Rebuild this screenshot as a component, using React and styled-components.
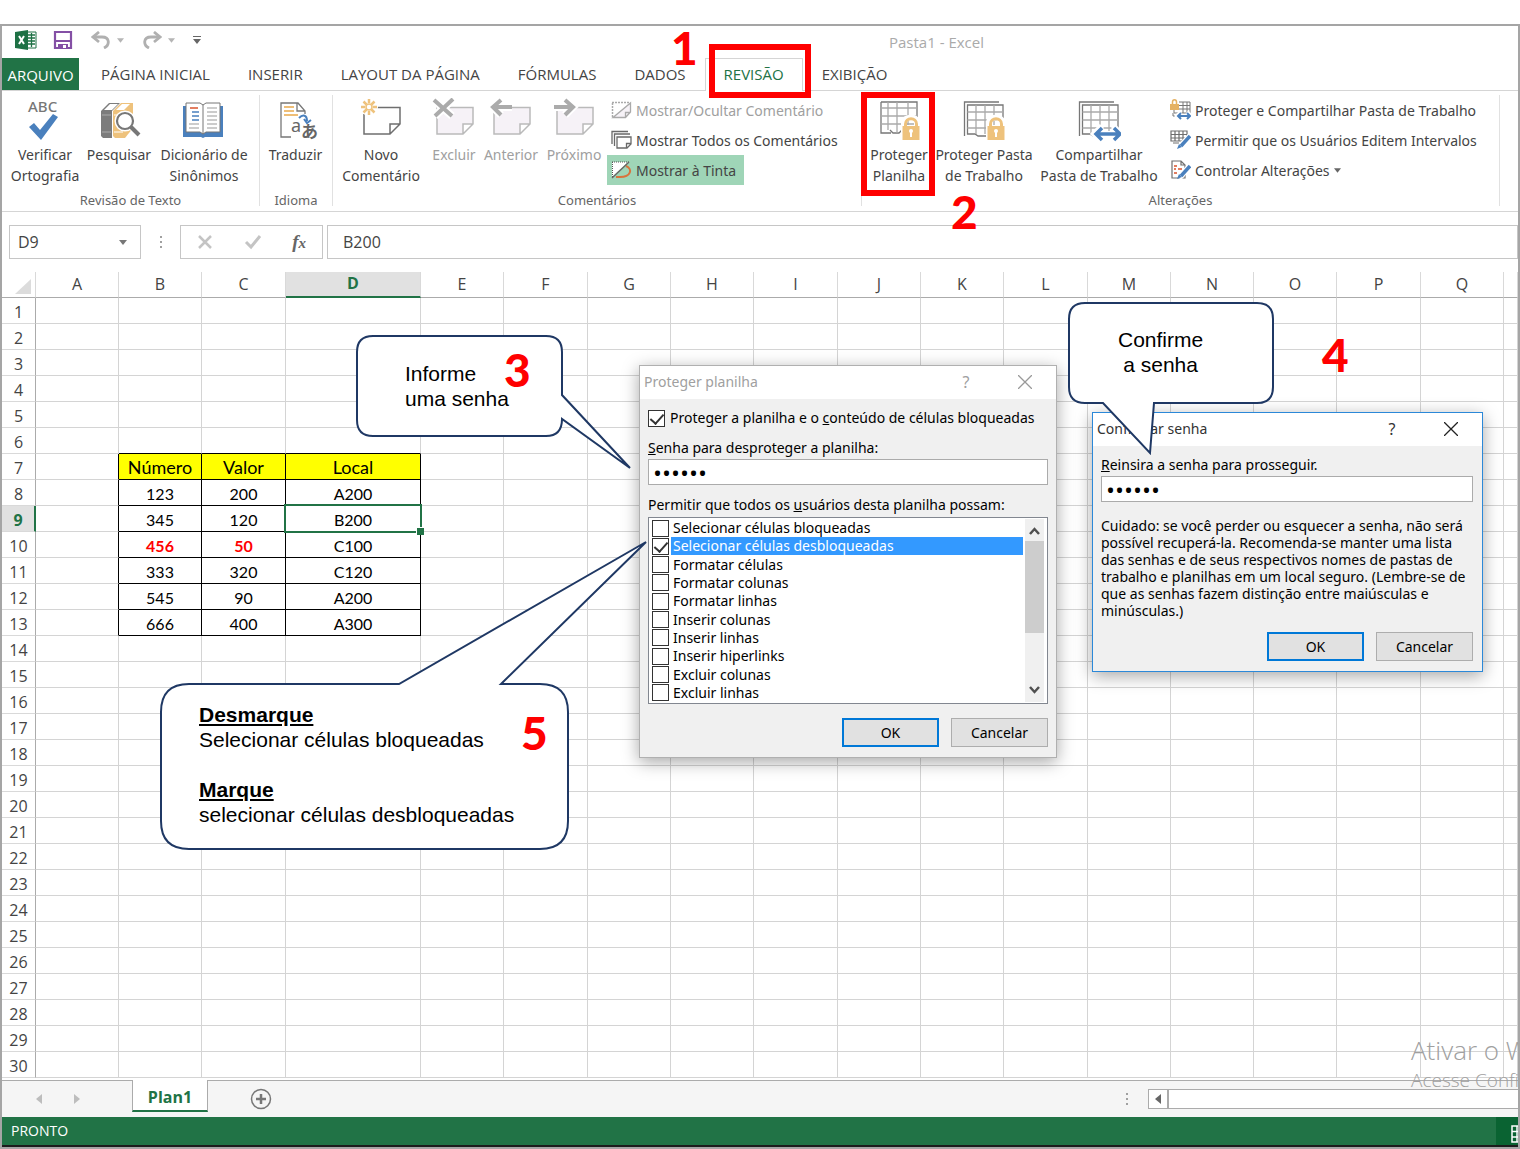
import React, { useState } from "react";
import styled, { createGlobalStyle, css } from "styled-components";

const GlobalStyle = createGlobalStyle`
  * {
    box-sizing: border-box;
  }
  body {
    margin: 0;
    background: #ffffff;
    color: #444444;
    font-family: "Open Sans", "Noto Sans", sans-serif;
    font-size: 15px;
  }
  button, input {
    font-family: inherit;
    font-size: inherit;
    color: inherit;
    margin: 0;
    padding: 0;
  }
  button {
    border: 0;
    background: transparent;
  }
  svg {
    display: block;
    flex: none;
  }
`;

const Page = styled.div`
  padding-top: 24px;
`;

const Window = styled.div`
  position: relative;
  overflow: hidden;
  border: 2px solid #a5a5a5;
`;

/* title bar */

const TitleBar = styled.header`
  display: flex;
  align-items: center;
  height: 32px;
  padding: 0 13px;
`;

const QuickButton = styled.button`
  display: flex;
  align-items: center;
  gap: 6px;
  margin-right: ${props => props.$space || 0}px;
  padding-bottom: 4px;
`;

const WindowTitle = styled.h1`
  margin: 0 0 0 688px;
  font-size: 15px;
  font-weight: 400;
  color: #aaaaaa;
  white-space: nowrap;
`;

/* tabs */

const Tabs = styled.nav`
  display: flex;
  height: 33px;
  border-bottom: 1px solid #d5d5d5;
`;

const Tab = styled.button`
  height: 33px;
  padding: 0 18px 2px;
  border: 1px solid transparent;
  border-bottom: 0;
  white-space: nowrap;
  ${props =>
    props.$active &&
    css`
      background: #ffffff;
      border-color: #d5d5d5;
      color: #217346;
    `}
`;

const FileTab = styled(Tab)`
  width: 77px;
  height: 32px;
  padding: 0;
  margin-right: 3px;
  background: #217346;
  color: #ffffff;
`;

/* ribbon */

const Ribbon = styled.div`
  display: flex;
  height: 121px;
  padding: 4px 0 5px;
  border-bottom: 1px solid #d5d5d5;
  font-family: "Noto Sans", "Open Sans", sans-serif;
  font-size: 14px;
`;

const Group = styled.section`
  display: flex;
  flex-direction: column;
  flex: none;
  width: ${props => props.$width}px;
  border-right: 1px solid #e1e1e1;
`;

const GroupBody = styled.div`
  display: flex;
  flex: 1;
`;

const GroupName = styled.div`
  height: 20px;
  padding-top: 4px;
  font-size: 13px;
  line-height: 20px;
  text-align: center;
  color: #666666;
`;

const BigButton = styled.button`
  display: flex;
  flex-direction: column;
  align-items: center;
  flex: none;
  width: ${props => props.$width}px;
  padding-top: 3px;
  line-height: 21px;
  white-space: nowrap;
  color: ${props => (props.disabled ? "#a0a0a0" : "#444444")};
  svg {
    margin-bottom: 2px;
  }
`;

const SmallList = styled.div`
  display: flex;
  flex-direction: column;
  align-items: flex-start;
  margin-left: ${props => props.$indent || 0}px;
`;

const SmallButton = styled.button`
  display: flex;
  align-items: center;
  gap: 4px;
  height: 30px;
  padding: 0 8px 0 4px;
  white-space: nowrap;
  background: ${props => (props.$pressed ? "#9fd5b7" : "transparent")};
  color: ${props => (props.disabled ? "#a0a0a0" : "#444444")};
`;

/* formula bar */

const FormulaBar = styled.div`
  display: flex;
  height: 60px;
  padding: 13px 0 13px 7px;
  font-size: 16px;
`;

const NameBox = styled.div`
  display: flex;
  align-items: center;
  width: 132px;
  border: 1px solid #c6c6c6;
  input {
    width: 100px;
    margin-left: 8px;
    border: 0;
    outline: 0;
  }
`;

const Dots = styled.div`
  display: flex;
  flex-direction: column;
  justify-content: center;
  gap: 3px;
  width: ${props => props.$width}px;
  padding-left: ${props => props.$indent || 0}px;
  i {
    width: 2px;
    height: 2px;
    background: #a0a0a0;
  }
`;

const FormulaButtons = styled.div`
  display: flex;
  align-items: center;
  justify-content: space-between;
  width: 143px;
  padding: 0 16px;
  border: 1px solid #c6c6c6;
`;

const FxButton = styled.button`
  font: italic bold 19px/20px "Liberation Serif", serif;
  color: #666666;
  sub {
    font-size: 15px;
    line-height: 0;
    vertical-align: baseline;
  }
`;

const FormulaInput = styled.input`
  flex: 1;
  min-width: 0;
  margin-left: 4px;
  padding-left: 15px;
  border: 1px solid #c6c6c6;
  outline: 0;
`;

/* sheet */

const Sheet = styled.table`
  width: 100%;
  table-layout: fixed;
  border-collapse: separate;
  border-spacing: 0;
  margin-bottom: 2px;
`;

const ColumnHead = styled.th`
  height: 26px;
  padding: 0 0 2px;
  border-right: 1px solid #d9d9d9;
  border-bottom: 1px solid #ababab;
  font-size: 16px;
  font-weight: 400;
  line-height: 22px;
  color: #444444;
  ${props =>
    props.$selected &&
    css`
      background: #e1e1e1;
      border-bottom: 2px solid #217346;
      font-weight: 700;
      color: #217346;
    `}
  svg {
    margin: 6px 0 0 13px;
  }
`;

const RowHead = styled.th`
  height: 26px;
  padding: 3px 0 0;
  border-right: 1px solid #ababab;
  border-bottom: 1px solid #d9d9d9;
  font-size: 16px;
  font-weight: 400;
  line-height: 22px;
  color: #444444;
  ${props =>
    props.$selected &&
    css`
      background: #e1e1e1;
      border-right: 2px solid #217346;
      font-weight: 700;
      color: #217346;
    `}
`;

const Cell = styled.td`
  position: relative;
  height: 26px;
  padding: 2px 0 0;
  border-right: 1px solid ${props => (props.$inkRight ? "#000000" : "#d4d4d4")};
  border-bottom: 1px solid ${props => (props.$inkBottom ? "#000000" : "#d4d4d4")};
  background: ${props => (props.$head ? "#ffff00" : "transparent")};
  font-family: Lato, sans-serif;
  font-size: ${props => (props.$head ? 18 : 16)}px;
  line-height: 23px;
  text-align: center;
  color: ${props => (props.$alert ? "#ff0000" : "#000000")};
  font-weight: ${props => (props.$alert ? 700 : 400)};
`;

const Selection = styled.span`
  position: absolute;
  z-index: 1;
  inset: -2px;
  border: 2px solid #217346;
  &::after {
    content: "";
    position: absolute;
    right: -4px;
    bottom: -4px;
    width: 7px;
    height: 7px;
    border: solid #ffffff;
    border-width: 1px 0 0 1px;
    background: #217346;
  }
`;

/* sheet tabs and status bar */

const SheetBar = styled.div`
  display: flex;
  height: 37px;
  border-top: 1px solid #ababab;
  background: #f5f5f5;
`;

const SheetNav = styled.div`
  display: flex;
  align-items: center;
  gap: 30px;
  width: 130px;
  padding-left: 34px;
`;

const SheetTab = styled.button`
  width: 76px;
  height: 32px;
  margin-top: -1px;
  padding-top: 3px;
  border: 1px solid #ababab;
  border-top: 0;
  border-bottom: 2px solid #217346;
  background: #ffffff;
  font-size: 16px;
  font-weight: 700;
  color: #217346;
`;

const AddSheet = styled.button`
  margin: 0 auto 0 42px;
`;

const ScrollTrack = styled.div`
  display: flex;
  width: 370px;
  height: 20px;
  margin-top: 8px;
  border: 1px solid #ababab;
  border-right: 0;
  background: #ffffff;
  button {
    display: grid;
    place-items: center;
    width: 20px;
    border-right: 2px solid #ababab;
  }
`;

const StatusBar = styled.footer`
  display: flex;
  align-items: stretch;
  justify-content: space-between;
  height: 30px;
  padding-left: 9px;
  border-bottom: 2px solid #1c1c1c;
  background: #217346;
  font-size: 14px;
  line-height: 28px;
  color: #ffffff;
  button {
    width: 22px;
    padding: 5px 0 0 15px;
    overflow: hidden;
    background: #0a6332;
  }
`;

const Watermark = styled.div`
  position: absolute;
  left: 1409px;
  bottom: 53px;
  font-size: 19px;
  font-weight: 300;
  line-height: 27px;
  white-space: nowrap;
  color: #a0a0a0;
  pointer-events: none;
  p {
    margin: 0;
  }
  p:first-child {
    font-size: 26px;
    line-height: 33px;
  }
`;

/* dialogs */

const Dialog = styled.form`
  position: absolute;
  left: ${props => props.$x}px;
  top: ${props => props.$y}px;
  width: ${props => props.$width}px;
  border: 1px solid ${props => (props.$focused ? "#2b88d8" : "#b0b0b0")};
  background: #f0f0f0;
  box-shadow: 0 4px 16px rgba(0, 0, 0, 0.35);
  font-family: "Noto Sans", "Open Sans", sans-serif;
  font-size: 14px;
  color: #000000;
`;

const DialogTitle = styled.div`
  display: flex;
  align-items: center;
  height: 33px;
  padding: 0 24px 2px 4px;
  background: #ffffff;
  color: ${props => (props.$muted ? "#a0a0a0" : "#333333")};
  h2 {
    flex: 1;
    margin: 0;
    font-size: 14px;
    font-weight: 400;
  }
  button:first-of-type {
    width: 12px;
    margin-right: 46px;
    font-size: 16px;
  }
`;

const DialogBody = styled.div`
  display: flex;
  flex-direction: column;
  padding: ${props => props.$pad};
`;

const Label = styled.label`
  line-height: 20px;
  white-space: nowrap;
`;

const CheckLabel = styled(Label)`
  display: flex;
  align-items: center;
  gap: 5px;
`;

const CheckBox = styled.input.attrs({ type: "checkbox" })`
  appearance: none;
  display: grid;
  justify-content: center;
  flex: none;
  width: 17px;
  height: 17px;
  border: 1px solid #333333;
  background: #ffffff;
  &:checked::before {
    content: "";
    width: 6px;
    height: 11px;
    border: solid #333333;
    border-width: 0 2px 2px 0;
    transform: rotate(42deg);
  }
`;

const Password = styled.input.attrs({ type: "password" })`
  height: 26px;
  padding: 0 4px;
  border: 1px solid #ababab;
  outline: 0;
  background: #ffffff;
  font-family: "Open Sans", sans-serif;
  font-size: 24px;
  line-height: 24px;
`;

const ListBox = styled.div`
  display: flex;
  height: 187px;
  border: 1px solid #828790;
  background: #ffffff;
`;

const Options = styled.div`
  display: flex;
  flex-direction: column;
  justify-content: space-between;
  flex: 1;
  padding: 1px 0 1px 3px;
`;

const Option = styled.label`
  display: flex;
  align-items: center;
  gap: 2px;
  height: 18px;
  line-height: 18px;
  span {
    flex: 1;
    padding-left: 2px;
    background: ${props => (props.$selected ? "#3399ff" : "transparent")};
    color: ${props => (props.$selected ? "#ffffff" : "#000000")};
  }
`;

const ListScroll = styled.div`
  display: flex;
  flex-direction: column;
  align-items: center;
  width: 19px;
  margin: 1px 3px 1px 2px;
  padding: 8px 0;
  background: #f0f0f0;
`;

const ListThumb = styled.div`
  width: 19px;
  height: 92px;
  margin: 6px 0 auto;
  background: #cdcdcd;
`;

const Warning = styled.p`
  margin: 15px 0 13px;
  line-height: 17px;
  white-space: nowrap;
`;

const Buttons = styled.div`
  display: flex;
  justify-content: flex-end;
  gap: 12px;
`;

const PushButton = styled.button`
  width: 97px;
  height: 29px;
  border: ${props => (props.$primary ? "2px solid #0078d7" : "1px solid #adadad")};
  background: #e1e1e1;
`;

const Spacer = styled.span`
  display: block;
  height: ${props => props.$height}px;
`;

/* notes over the screen */

const Callout = styled.div`
  position: absolute;
  left: ${props => props.$x}px;
  top: ${props => props.$y}px;
  padding: ${props => props.$pad};
  font-family: "Liberation Sans", Arial, sans-serif;
  font-size: 21px;
  line-height: 25px;
  white-space: nowrap;
  text-align: ${props => props.$align || "left"};
  color: #000000;
  > svg {
    position: absolute;
    left: 0;
    top: 0;
    overflow: visible;
  }
  p {
    position: relative;
    margin: 0;
  }
  p + p {
    margin-top: 25px;
  }
`;

const Step = styled.strong`
  position: absolute;
  left: ${props => props.$x}px;
  top: ${props => props.$y}px;
  font: 900 46px/36px Lato, sans-serif;
  color: #ff0000;
`;

const Highlight = styled.div`
  position: absolute;
  left: ${props => props.$x}px;
  top: ${props => props.$y}px;
  width: ${props => props.$width}px;
  height: ${props => props.$height}px;
  border: 6px solid #ff0000;
  pointer-events: none;
`;

/* icons */

const Caret = ({ size = 7, color = "#b5b5b5" }) => (
  <svg width={size} height="5" viewBox="0 0 8 5">
    <path d="M0 0h8L4 5z" fill={color} />
  </svg>
);

const ExcelIcon = () => (
  <svg width="22" height="22" viewBox="0 0 22 22">
    <path d="M12 3h9v16h-9z" fill="#fff" stroke="#1e7145" />
    <path d="M13 6h7M13 9h7M13 12h7M13 15h7M16.500 4v14" stroke="#1e7145" strokeWidth="1.300" />
    <path d="M0 3l13-2v20L0 19z" fill="#1e7145" />
    <path d="M4 7l5 8M9 7l-5 8" stroke="#fff" strokeWidth="2" />
  </svg>
);

const SaveIcon = () => (
  <svg width="20" height="20" viewBox="0 0 20 20" fill="none">
    <path d="M2 2h16v16H2z" stroke="#8450a5" strokeWidth="2.200" />
    <path d="M3 11h14" stroke="#8450a5" strokeWidth="2" />
    <path d="M5 18v-4h10v4z" fill="#8450a5" />
    <path d="M10 15h3v3h-3z" fill="#fff" />
  </svg>
);

const UndoIcon = ({ flip }) => (
  <svg width="20" height="18" viewBox="0 0 20 18" fill="none" stroke="#b0b0b0" strokeWidth="2.800">
    <g transform={flip ? "matrix(-1 0 0 1 20 0)" : undefined}>
      <path d="M8 1L2 6l6 5" />
      <path d="M2 6h9c8 0 8 8 2 11" />
    </g>
  </svg>
);

const SpellIcon = () => (
  <svg width="44" height="44" viewBox="0 0 44 44" overflow="visible">
    <text x="5" y="14" fontSize="15" fontWeight="500" fill="#777" fontFamily="Noto Sans, sans-serif">ABC</text>
    <path d="M6 29l5-4 6 7 13-16 5 3-17 23z" fill="#4a80bd" />
  </svg>
);

const ResearchIcon = () => (
  <svg width="44" height="44" viewBox="0 0 44 44">
    <path d="M4 13l8-8h11l-8 8v27H6l-2-2z" fill="#7c7c7c" />
    <path d="M7 12l6-6h8l-6 6z" fill="#fff" />
    <path d="M5 17h9M5 34h9" stroke="#aaa" />
    <path d="M16 13l8-8h12v25l-8 10H18l-2-2z" fill="#eec27c" />
    <path d="M19 12l6-6h8l-6 6z" fill="#fff" />
    <path d="M17 17h9M17 34h9" stroke="#fff" />
    <circle cx="28" cy="23" r="8.500" fill="#fff" stroke="#fff" strokeWidth="4" />
    <path d="M34 29l8 8" stroke="#fff" strokeWidth="6" />
    <circle cx="28" cy="23" r="8" fill="#fff" stroke="#777" strokeWidth="2.200" />
    <path d="M34 29l8 8" stroke="#777" strokeWidth="4" />
  </svg>
);

const BookIcon = () => (
  <svg width="44" height="44" viewBox="0 0 44 44" fill="none">
    <path d="M1 8h40v31H23l-2 1-2-1H1z" fill="#4a80bd" />
    <path d="M4 5h14l3 2 3-2h14v29H24l-3 2-3-2H4z" fill="#fff" stroke="#777" />
    <path d="M21 7v29" stroke="#777" />
    <path d="M8 10h8" stroke="#d9532c" strokeWidth="1.500" />
    <path d="M10 14h7M10 18h7M10 22h7" stroke="#4a80bd" strokeWidth="1.500" />
    <path d="M7 26h10M7 30h10M25 10h10M25 14h10M25 18h10M25 22h10M25 26h10M25 30h10" stroke="#999" strokeWidth="1.200" />
  </svg>
);

const TranslateIcon = () => (
  <svg width="44" height="44" viewBox="0 0 44 44" fill="none" overflow="visible">
    <path d="M17 39H7V5h17l7 8v3M23 5v8h8" stroke="#777" strokeWidth="1.300" />
    <path d="M10 9h10M10 13h10M10 17h14" stroke="#e9a94b" strokeWidth="1.500" />
    <path d="M25 20c4-4 8-3 8 3M30 21l3 4 4-3" stroke="#4a80bd" strokeWidth="2" />
    <text x="17" y="34" fontSize="18" fill="#666" fontFamily="Noto Sans, sans-serif">a</text>
    <text x="27" y="40" fontSize="17" fontWeight="700" fill="#666" fontFamily="Noto Sans CJK JP, sans-serif">あ</text>
  </svg>
);

const Note = ({ muted }) => (
  <path
    d="M5 9.500h36V26L31 36H5zM41 26H31v10"
    fill={muted ? "#f6f2f7" : "#fff"}
    stroke={muted ? "#bababa" : "#6f6f6f"}
    strokeWidth="1.500"
  />
);

const NewCommentIcon = () => (
  <svg width="44" height="44" viewBox="0 0 44 44" fill="none">
    <Note />
    <circle cx="10" cy="9" r="9" fill="#fff" />
    <path
      d="M10 1v4M10 13v4M2 9h4M14 9h4M4.500 3.500l3 3M12.500 11.500l3 3M15.500 3.500l-3 3M7.500 11.500l-3 3"
      stroke="#eec27c"
      strokeWidth="2.500"
    />
    <circle cx="10" cy="9" r="3" stroke="#eec27c" strokeWidth="1.500" />
  </svg>
);

const markPaths = {
  remove: "M2 2l18 16M21 1L3 18",
  back: "M4 9h19M12 2L4 9l8 8",
  next: "M2 9h19M13 2l8 7-8 8"
};

const MutedCommentIcon = ({ mark }) => (
  <svg width="44" height="44" viewBox="0 0 44 44" fill="none">
    <Note muted />
    <path d={markPaths[mark]} stroke="#fff" strokeWidth="8" />
    <path d={markPaths[mark]} stroke="#ababab" strokeWidth="4" />
  </svg>
);

const ToggleCommentIcon = () => (
  <svg width="21" height="20" viewBox="0 0 21 20" fill="none" stroke="#aaa">
    <path d="M1 2.500h18M1.500 3v14" strokeDasharray="2 1" strokeWidth="1.500" />
    <path d="M2 17.500L19.500 3v9l-5 5.500zM14.500 17.500v-5h5" fill="#f6f2f7" strokeWidth="1.300" />
  </svg>
);

const AllCommentsIcon = () => (
  <svg width="21" height="20" viewBox="0 0 21 20" fill="none" stroke="#6a6a6a" strokeWidth="1.300">
    <path d="M1 14V1.500h16M3.500 16V4H19" />
    <path d="M6 7h14v7l-4 4H6zM20 13.500h-4.500V18" fill="#fff" />
  </svg>
);

const InkIcon = () => (
  <svg width="21" height="20" viewBox="0 0 21 20" fill="none">
    <path d="M1 2h16L1 17z" fill="#fff" />
    <path d="M1 2h17M1.500 2v15" stroke="#555" strokeDasharray="1 1" />
    <path d="M15 6c7 3 5 11-6 11H5" stroke="#d9733c" strokeWidth="2" />
    <path d="M1 18L18 2" stroke="#666" strokeWidth="1.300" />
  </svg>
);

const Lock = () => (
  <g>
    <path d="M27 29v-4c0-7 13-7 13-1v5" stroke="#fff" strokeWidth="6" />
    <path d="M24 27h19v16H24z" fill="#fff" />
    <path d="M28.500 29v-3c0-7 11-7 11 0v3" stroke="#eec27c" strokeWidth="3" />
    <path d="M25.500 28h17v14h-17z" fill="#eec27c" />
    <circle cx="34" cy="33" r="2" fill="#fff" />
    <path d="M34 33v6" stroke="#fff" strokeWidth="2" />
  </g>
);

const Share = () => (
  <g>
    <path d="M17 36h27M25 28l-8 8 8 8M36 28l8 8-8 8" stroke="#fff" strokeWidth="6" />
    <path d="M19 36h24M25 30l-6 6 6 6M37 30l6 6-6 6" stroke="#4a80bd" strokeWidth="3.500" />
  </g>
);

const SheetIcon = ({ book, children }) => (
  <svg width="44" height="44" viewBox="0 0 44 44" fill="none">
    {book ? (
      <g stroke="#777" strokeWidth="1.300">
        <path d="M2.500 38V4H37" />
        <path d="M5.500 7H41v29H27l-3 2h-8l-3-2H5.500z" fill="#fff" />
        <path d="M5.500 14H41M5.500 22H41M5.500 30H41M14 7v29M23 7v29M32 7v29" stroke="#aaa" />
      </g>
    ) : (
      <g stroke="#777" strokeWidth="1.300">
        <path d="M4 4h36v28H25l-3 3h-6l-3-3M4 4v31h10" fill="#fff" />
        <path d="M4 10h36M4 18h36M4 26h36M11 4v28M20 4v31M31 4v28" stroke="#aaa" />
      </g>
    )}
    {children}
  </svg>
);

const ProtectShareIcon = () => (
  <svg width="21" height="22" viewBox="0 0 21 22" fill="none">
    <path d="M9 3h11v11H4v-3M9 6.500h11M9 10h11M13 3v11M17 3v11M3 14v3h3" stroke="#777" />
    <path d="M2.500 5V3c0-3 4-3 4 0v2" stroke="#e5b264" strokeWidth="1.500" />
    <path d="M0 5h9v6H0z" fill="#e5b264" />
    <path d="M8 17h12M11 13l-4 4 4 4M17 13l4 4-4 4" stroke="#fff" strokeWidth="4" />
    <path d="M8 17h12M11 14l-3 3 3 3M17 14l3 3-3 3" stroke="#4a80bd" strokeWidth="2" />
  </svg>
);

const PencilMark = () => (
  <g>
    <path d="M20 7L9 19" stroke="#fff" strokeWidth="6" />
    <path d="M20 7l-9 10" stroke="#4a80bd" strokeWidth="3.500" />
    <path d="M9 15l3 3-5 2z" fill="#4a80bd" />
  </g>
);

const AllowEditIcon = () => (
  <svg width="21" height="22" viewBox="0 0 21 22" fill="none">
    <path d="M1 2h16v10H1zM1 5.500h16M1 9h16M5 2v10M9 2v10M13 2v10" stroke="#6f6f6f" strokeWidth="1.200" />
    <path d="M3 14h6" stroke="#6f6f6f" />
    <PencilMark />
  </svg>
);

const TrackIcon = () => (
  <svg width="21" height="22" viewBox="0 0 21 22" fill="none">
    <path d="M2 2h9l4 4v13H2zM11 2v4h4" stroke="#6f6f6f" strokeWidth="1.200" />
    <path d="M4 7h3M4 10h2M8 10h4M4 14h3" stroke="#d9532c" strokeWidth="1.500" />
    <PencilMark />
  </svg>
);

const CloseIcon = ({ color }) => (
  <svg width="14" height="14" viewBox="0 0 14 14" stroke={color} strokeWidth="1.300">
    <path d="M0 0l14 14M14 0L0 14" />
  </svg>
);

const Chevron = ({ down }) => (
  <svg width="11" height="8" viewBox="0 0 11 8" fill="none" stroke="#505050" strokeWidth="2.500">
    <path d={down ? "M1 1l4.500 5L10 1" : "M1 7l4.500-5L10 7"} />
  </svg>
);

const Arrow = ({ right, color = "#bdbdbd" }) => (
  <svg width="7" height="10" viewBox="0 0 7 10" fill={color}>
    <path d={right ? "M1 0l6 5-6 5z" : "M6 0L0 5l6 5z"} />
  </svg>
);

/* data */

const tabs = [
  "PÁGINA INICIAL",
  "INSERIR",
  "LAYOUT DA PÁGINA",
  "FÓRMULAS",
  "DADOS",
  "REVISÃO",
  "EXIBIÇÃO"
];

const columns = [
  ["A", 83],
  ["B", 83],
  ["C", 84],
  ["D", 135],
  ["E", 83],
  ["F", 84],
  ["G", 83],
  ["H", 83],
  ["I", 84],
  ["J", 83],
  ["K", 83],
  ["L", 84],
  ["M", 83],
  ["N", 83],
  ["O", 83],
  ["P", 84],
  ["Q", 83]
];

const firstRow = 7;
const records = [
  ["Número", "Valor", "Local"],
  ["123", "200", "A200"],
  ["345", "120", "B200"],
  ["456", "50", "C100"],
  ["333", "320", "C120"],
  ["545", "90", "A200"],
  ["666", "400", "A300"]
];

const permissions = [
  "Selecionar células bloqueadas",
  "Selecionar células desbloqueadas",
  "Formatar células",
  "Formatar colunas",
  "Formatar linhas",
  "Inserir colunas",
  "Inserir linhas",
  "Inserir hiperlinks",
  "Excluir colunas",
  "Excluir linhas"
];

// records start at column B
const valueAt = (row, col) => {
  const record = records[row - firstRow];
  return record ? record[col - 1] : undefined;
};

const SheetRow = ({ row }) => (
  <tr>
    <RowHead scope="row" $selected={row === 9}>
      {row}
    </RowHead>
    {[...columns, ["R"]].map(([name], col) => {
      const value = valueAt(row, col);
      return (
        <Cell
          key={name}
          $head={Boolean(value) && row === firstRow}
          $alert={row === 10 && col < 3}
          $inkRight={Boolean(value || valueAt(row, col + 1))}
          $inkBottom={Boolean(value || valueAt(row + 1, col))}
        >
          {value}
          {row === 9 && name === "D" && <Selection />}
        </Cell>
      );
    })}
  </tr>
);

const RibbonBar = () => (
  <Ribbon>
    <Group $width={258}>
      <GroupBody>
        <BigButton $width={86}>
          <SpellIcon />
          <span>Verificar</span>
          <span>Ortografia</span>
        </BigButton>
        <BigButton $width={62}>
          <ResearchIcon />
          Pesquisar
        </BigButton>
        <BigButton $width={108}>
          <BookIcon />
          <span>Dicionário de</span>
          <span>Sinônimos</span>
        </BigButton>
      </GroupBody>
      <GroupName>Revisão de Texto</GroupName>
    </Group>
    <Group $width={73}>
      <GroupBody>
        <BigButton $width={71}>
          <TranslateIcon />
          Traduzir
        </BigButton>
      </GroupBody>
      <GroupName>Idioma</GroupName>
    </Group>
    <Group $width={529}>
      <GroupBody>
        <BigButton $width={96}>
          <NewCommentIcon />
          <span>Novo</span>
          <span>Comentário</span>
        </BigButton>
        <BigButton $width={50} disabled>
          <MutedCommentIcon mark="remove" />
          Excluir
        </BigButton>
        <BigButton $width={64} disabled>
          <MutedCommentIcon mark="back" />
          Anterior
        </BigButton>
        <BigButton $width={62} disabled>
          <MutedCommentIcon mark="next" />
          Próximo
        </BigButton>
        <SmallList $indent={2}>
          <SmallButton disabled>
            <ToggleCommentIcon />
            Mostrar/Ocultar Comentário
          </SmallButton>
          <SmallButton>
            <AllCommentsIcon />
            Mostrar Todos os Comentários
          </SmallButton>
          <SmallButton $pressed>
            <InkIcon />
            Mostrar à Tinta
          </SmallButton>
        </SmallList>
      </GroupBody>
      <GroupName>Comentários</GroupName>
    </Group>
    <Group $width={638}>
      <GroupBody>
        <BigButton $width={74}>
          <SheetIcon>
            <Lock />
          </SheetIcon>
          <span>Proteger</span>
          <span>Planilha</span>
        </BigButton>
        <BigButton $width={96}>
          <SheetIcon book>
            <Lock />
          </SheetIcon>
          <span>Proteger Pasta</span>
          <span>de Trabalho</span>
        </BigButton>
        <BigButton $width={134}>
          <SheetIcon book>
            <Share />
          </SheetIcon>
          <span>Compartilhar</span>
          <span>Pasta de Trabalho</span>
        </BigButton>
        <SmallList>
          <SmallButton>
            <ProtectShareIcon />
            Proteger e Compartilhar Pasta de Trabalho
          </SmallButton>
          <SmallButton>
            <AllowEditIcon />
            Permitir que os Usuários Editem Intervalos
          </SmallButton>
          <SmallButton>
            <TrackIcon />
            Controlar Alterações
            <Caret color="#666666" />
          </SmallButton>
        </SmallList>
      </GroupBody>
      <GroupName>Alterações</GroupName>
    </Group>
  </Ribbon>
);

const ProtectDialog = () => {
  const [checked, setChecked] = useState([1]);
  const toggle = index =>
    setChecked(checked.includes(index) ? checked.filter(i => i !== index) : [...checked, index]);

  return (
    <Dialog $x={637} $y={339} $width={418} onSubmit={e => e.preventDefault()}>
      <DialogTitle $muted>
        <h2>Proteger planilha</h2>
        <button type="button">?</button>
        <button type="button" aria-label="Fechar">
          <CloseIcon color="#999999" />
        </button>
      </DialogTitle>
      <DialogBody $pad="9px 8px 10px">
        <CheckLabel>
          <CheckBox defaultChecked />
          <span>
            Proteger a planilha e o <u>c</u>onteúdo de células bloqueadas
          </span>
        </CheckLabel>
        <Spacer $height={10} />
        <Label htmlFor="senha">
          <u>S</u>enha para desproteger a planilha:
        </Label>
        <Spacer $height={1} />
        <Password id="senha" defaultValue="abc123" />
        <Spacer $height={10} />
        <Label as="div">
          Permitir que todos os <u>u</u>suários desta planilha possam:
        </Label>
        <Spacer $height={2} />
        <ListBox>
          <Options>
            {permissions.map((text, index) => (
              <Option key={text} $selected={index === 1}>
                <CheckBox checked={checked.includes(index)} onChange={() => toggle(index)} />
                <span>{text}</span>
              </Option>
            ))}
          </Options>
          <ListScroll>
            <Chevron />
            <ListThumb />
            <Chevron down />
          </ListScroll>
        </ListBox>
        <Spacer $height={14} />
        <Buttons>
          <PushButton $primary>OK</PushButton>
          <PushButton type="button">Cancelar</PushButton>
        </Buttons>
      </DialogBody>
    </Dialog>
  );
};

const ConfirmDialog = () => (
  <Dialog $x={1090} $y={386} $width={391} $focused onSubmit={e => e.preventDefault()}>
    <DialogTitle>
      <h2>Confirmar senha</h2>
      <button type="button">?</button>
      <button type="button" aria-label="Fechar">
        <CloseIcon color="#222222" />
      </button>
    </DialogTitle>
    <DialogBody $pad="9px 9px 10px 8px">
      <Label htmlFor="confirmacao">
        <u>R</u>einsira a senha para prosseguir.
      </Label>
      <Spacer $height={1} />
      <Password id="confirmacao" defaultValue="abc123" />
      <Warning>
        Cuidado: se você perder ou esquecer a senha, não será
        <br />
        possível recuperá-la. Recomenda-se manter uma lista
        <br />
        das senhas e de seus respectivos nomes de pastas de
        <br />
        trabalho e planilhas em um local seguro. (Lembre-se de
        <br />
        que as senhas fazem distinção entre maiúsculas e
        <br />
        minúsculas.)
      </Warning>
      <Buttons>
        <PushButton $primary>OK</PushButton>
        <PushButton type="button">Cancelar</PushButton>
      </Buttons>
    </DialogBody>
  </Dialog>
);

const Bubble = ({ width, height, d }) => (
  <svg width={width} height={height} fill="#fff" stroke="#1f3864" strokeWidth="2">
    <path d={d} />
  </svg>
);

const App = () => (
  <Page>
    <GlobalStyle />
    <Window>
      <TitleBar>
        <QuickButton $space={16} aria-label="Excel">
          <ExcelIcon />
        </QuickButton>
        <QuickButton $space={18} aria-label="Salvar">
          <SaveIcon />
        </QuickButton>
        <QuickButton $space={18} aria-label="Desfazer">
          <UndoIcon />
          <Caret />
        </QuickButton>
        <QuickButton $space={18} aria-label="Refazer">
          <UndoIcon flip />
          <Caret />
        </QuickButton>
        <QuickButton aria-label="Personalizar">
          <svg width="8" height="8" viewBox="0 0 8 8" fill="#666">
            <path d="M0 0h8v1H0zM0 3h8L4 8z" />
          </svg>
        </QuickButton>
        <WindowTitle>Pasta1 - Excel</WindowTitle>
      </TitleBar>
      <Tabs>
        <FileTab>ARQUIVO</FileTab>
        {tabs.map(name => (
          <Tab key={name} $active={name === "REVISÃO"}>
            {name}
          </Tab>
        ))}
      </Tabs>
      <RibbonBar />
      <FormulaBar>
        <NameBox>
          <input aria-label="Caixa de nome" defaultValue="D9" />
          <Caret size={10} color="#777777" />
        </NameBox>
        <Dots $width={39} $indent={19}>
          <i />
          <i />
          <i />
        </Dots>
        <FormulaButtons>
          <svg width="16" height="16" viewBox="0 0 16 16" stroke="#c4c4c4" strokeWidth="2.500">
            <path d="M2 2l12 12M14 2L2 14" />
          </svg>
          <svg width="18" height="16" viewBox="0 0 18 16" fill="none" stroke="#c4c4c4" strokeWidth="3">
            <path d="M2 8l5 5L16 2" />
          </svg>
          <FxButton aria-label="Inserir função">
            f<sub>x</sub>
          </FxButton>
        </FormulaButtons>
        <FormulaInput aria-label="Barra de fórmulas" defaultValue="B200" />
      </FormulaBar>
      <Sheet>
        <colgroup>
          <col width="34" />
          {columns.map(([name, width]) => (
            <col key={name} width={width} />
          ))}
          <col />
        </colgroup>
        <thead>
          <tr>
            <ColumnHead>
              <svg width="16" height="15" viewBox="0 0 16 15" fill="#dcdcdc">
                <path d="M16 0v15H0z" />
              </svg>
            </ColumnHead>
            {columns.map(([name]) => (
              <ColumnHead key={name} scope="col" $selected={name === "D"}>
                {name}
              </ColumnHead>
            ))}
            <ColumnHead />
          </tr>
        </thead>
        <tbody>
          {Array.from({ length: 30 }, (_, i) => (
            <SheetRow key={i} row={i + 1} />
          ))}
        </tbody>
      </Sheet>
      <SheetBar>
        <SheetNav>
          <Arrow />
          <Arrow right />
        </SheetNav>
        <SheetTab>Plan1</SheetTab>
        <AddSheet aria-label="Nova planilha">
          <svg width="22" height="22" viewBox="0 0 22 22" fill="none" stroke="#777">
            <circle cx="11" cy="11" r="9.500" strokeWidth="1.500" />
            <path d="M6 11h10M11 6v10" strokeWidth="2.500" />
          </svg>
        </AddSheet>
        <Dots $width={22}>
          <i />
          <i />
          <i />
        </Dots>
        <ScrollTrack>
          <button aria-label="Rolar para a esquerda">
            <Arrow color="#666666" />
          </button>
        </ScrollTrack>
      </SheetBar>
      <StatusBar>
        PRONTO
        <button aria-label="Normal">
          <svg width="18" height="18" viewBox="0 0 18 18" fill="none" stroke="#fff" strokeWidth="1.500">
            <path d="M1 1h16v16H1zM1 6.500h16M1 12h16M6 1v16M12 1v16" />
          </svg>
        </button>
      </StatusBar>
      <Watermark>
        <p>Ativar o Windows</p>
        <p>Acesse Configurações</p>
      </Watermark>

      <ProtectDialog />
      <ConfirmDialog />

      <Callout $x={355} $y={310} $pad="25px 0 0 48px">
        <Bubble
          width="206"
          height="102"
          d="M16 0H189Q205 0 205 16V59L273 132L205 83Q205 100 189 100H16Q0 100 0 84V16Q0 0 16 0Z"
        />
        <p>
          Informe
          <br />
          uma senha
        </p>
      </Callout>
      <Callout $x={1067} $y={277} $pad="24px 0 0 49px" $align="center">
        <Bubble
          width="206"
          height="102"
          d="M16 0H188Q204 0 204 16V84Q204 100 188 100H85L81 150L34 100H16Q0 100 0 84V16Q0 0 16 0Z"
        />
        <p>
          Confirme
          <br />a senha
        </p>
      </Callout>
      <Callout $x={159} $y={658} $pad="18px 0 0 38px">
        <Bubble
          width="408"
          height="166"
          d="M28 0H238L485 -142L340 0H379Q407 0 407 28V137Q407 165 379 165H28Q0 165 0 137V28Q0 0 28 0Z"
        />
        <p>
          <b>
            <u>Desmarque</u>
          </b>
          <br />
          Selecionar células bloqueadas
        </p>
        <p>
          <b>
            <u>Marque</u>
          </b>
          <br />
          selecionar células desbloqueadas
        </p>
      </Callout>

      <Highlight $x={707} $y={18} $width={102} $height={54} />
      <Highlight $x={859} $y={66} $width={74} $height={104} />
      <Step $x={669} $y={4}>1</Step>
      <Step $x={949} $y={168}>2</Step>
      <Step $x={502} $y={326}>3</Step>
      <Step $x={1320} $y={311}>4</Step>
      <Step $x={519} $y={689}>5</Step>
    </Window>
  </Page>
);

export default App;
